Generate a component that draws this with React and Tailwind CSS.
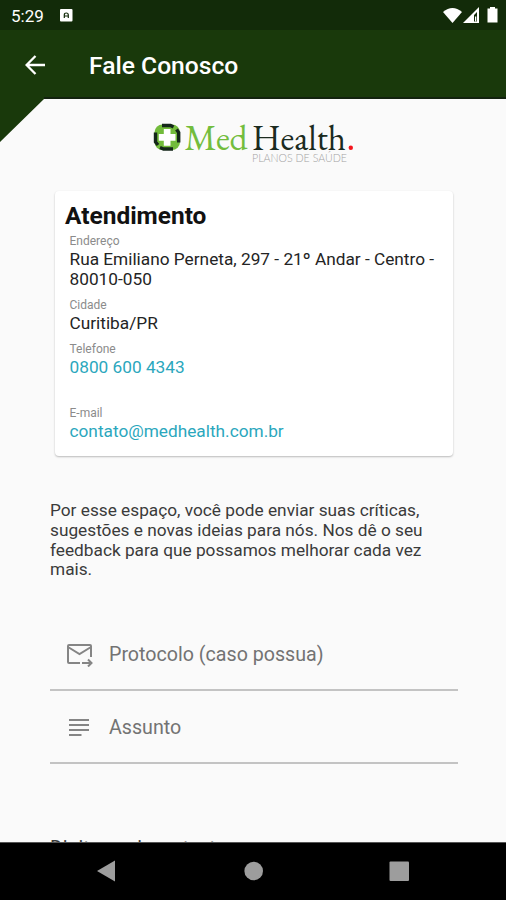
import React from "react";

// A single line of text that never wraps.
function T({ className = "", children }) {
  return <div className={"whitespace-nowrap " + className}>{children}</div>;
}

function Logo() {
  return (
    <svg className="block overflow-visible" width="210" height="52" viewBox="150 116 210 52">
      <rect x="154.500" y="124.500" width="25.500" height="25.500" rx="8" fill="#72bb3b" />
      <g fill="none" stroke="#14261a" strokeWidth="3.400">
        <path d="M162 125.500h8.500l3 1.500" />
        <path d="M176.500 129.500l2.200 3v10" />
        <path d="M173 149h-9.500l-3.500-1.500" />
        <path d="M158 145l-2.500-3v-9.500" />
      </g>
      <path d="M163.800 129h6.700v5h5v6.700h-5v5h-6.700v-5h-5V134h5z" fill="#fff" />
      <g fontFamily="'EB Garamond', Garamond, 'Liberation Serif', serif" fontSize="37">
        <text x="184.500" y="150" fill="#73bd3d" textLength="63" lengthAdjust="spacingAndGlyphs">Med</text>
        <text x="252" y="150" fill="#1b2b1f" textLength="94" lengthAdjust="spacingAndGlyphs">Health</text>
      </g>
      <circle cx="350.800" cy="147.800" r="2.200" fill="#f4151c" />
      <text x="252" y="161.500" fill="#a3a3a3" fontFamily="Lato, sans-serif" fontWeight="300" fontSize="12.500" textLength="95" lengthAdjust="spacingAndGlyphs">PLANOS DE SAÚDE</text>
    </svg>
  );
}

export default function App() {
  return (
    <div className="flex h-[900px] w-[506px] flex-col overflow-hidden bg-[#fafafa] font-['Roboto',sans-serif]">
      <div className="flex h-[30px] shrink-0 items-center bg-[#122b09] text-white">
        <T className="ml-[11px] mt-[2px] w-[49px] text-[17px] leading-5">5:29</T>
        <svg width="13" height="14" viewBox="0 0 13 14"><rect y="1" width="12.500" height="12.500" rx="1" fill="#fff" /><path d="M4.300 10V7q0-2 2-2t2 2v3M4.300 8h4" fill="none" stroke="#122b09" strokeWidth="1.200" /></svg>
        <svg className="ml-auto mr-[7px]" width="58" height="20" viewBox="441 5 58 20" fill="#fff">
          <path d="M443 12q9.500-8 19 0l-9.500 11z" />
          <path fillRule="evenodd" d="M463 23 479 7v16zM474 15v6.500h3V12z" />
          <path d="M475 16.500h1.300v5H475z" />
          <path d="M490 7h5v1.500h2.500v14h-10v-14h2.500z" />
        </svg>
      </div>
      <div className="flex h-[67px] shrink-0 items-center bg-[#19390b] text-white">
        <svg className="ml-[25px] mt-[2px]" width="21" height="20" viewBox="0 0 21 20" fill="none" stroke="#fff" strokeWidth="2.300"><path d="M20 10H2M10.500 1 1.600 10l8.900 9" /></svg>
        <T className="ml-[43px] mt-[4px] text-[24.650px] font-medium leading-8">Fale Conosco</T>
      </div>
      <div className="flex h-[745px] shrink-0 flex-col overflow-hidden">
        <div className="flex h-[94px] shrink-0">
          <svg className="block shrink-0" width="506" height="94" viewBox="0 97 506 94">
            <path d="M0 97h506v2H44L0 142z" fill="#19390b" />
            <path d="M44 98h462" stroke="#101b12" strokeWidth="1.500" />
          </svg>
          <div className="-ml-[356px] mt-[19px]"><Logo /></div>
        </div>
        <div className="ml-[55px] flex h-[265px] w-[398px] shrink-0 flex-col rounded-[4px] bg-white pl-[14.500px] text-[17.250px] leading-5 text-[#242424] shadow-[0_1px_2px_rgba(0,0,0,0.26)]">
          <T className="-ml-[4.500px] mt-[11px] text-[24.450px] font-bold leading-7 text-[#111]">Atendimento</T>
          <T className="mt-[4px] text-[12px] leading-[15px] text-[#8b8b8b]">Endereço</T>
          <T>Rua Emiliano Perneta, 297 - 21º Andar - Centro -</T>
          <T>80010-050</T>
          <T className="mt-[9px] text-[12px] leading-[15px] text-[#8b8b8b]">Cidade</T>
          <T>Curitiba/PR</T>
          <T className="mt-[9px] text-[12px] leading-[15px] text-[#8b8b8b]">Telefone</T>
          <T className="text-[#2ba7bd]">0800 600 4343</T>
          <T className="mt-[29px] text-[12px] leading-[15px] text-[#8b8b8b]">E-mail</T>
          <T className="text-[#2ba7bd]">contato@medhealth.com.br</T>
        </div>
        <div className="ml-[50px] mt-[45px] text-[17.250px] leading-[19.800px] text-[#3b3b3b]">
          <T>Por esse espaço, você pode enviar suas críticas,</T>
          <T>sugestões e novas ideias para nós. Nos dê o seu</T>
          <T>feedback para que possamos melhorar cada vez</T>
          <T>mais.</T>
        </div>
        <div className="ml-[50px] mt-[38px] flex h-[73px] w-[408px] shrink-0 items-center border-b-2 border-[#c3c3c3] text-[19.650px] text-[#737373]">
          <svg className="ml-[16px] mr-[16px] mt-[3px]" width="27" height="24" viewBox="66 643 27 24" fill="none" stroke="#858585" strokeWidth="2"><path d="M80 663H69q-1 0-1-1v-16q0-1 1-1h21q1 0 1 1v11M68 647l11.500 7 11.500-7M82 663h8M88 659.500l3.500 3.500-3.500 3.500" /></svg>
          <T className="mt-[3px]">Protocolo (caso possua)</T>
        </div>
        <div className="ml-[50px] flex h-[73px] w-[408px] shrink-0 items-center border-b-2 border-[#c3c3c3] text-[19.650px] text-[#737373]">
          <svg className="ml-[19px] mr-[20px] mt-[2px]" width="20" height="20" viewBox="0 0 20 20" stroke="#858585" strokeWidth="2"><path d="M0 2h20M0 7h20M0 12h20M0 17h12.500" /></svg>
          <T className="mt-[2px]">Assunto</T>
        </div>
        <T className="ml-[50px] mt-[73px] text-[19.500px] leading-6 text-[#3b3b3b]">Digite aqui seu texto</T>
      </div>
      <div className="flex h-[58px] shrink-0 items-center border-t border-[#555] bg-black">
        <svg width="506" height="57" viewBox="0 843 506 57" fill="#9d9d9d"><path d="M97 871 115 860.500v21z" /><circle cx="253.700" cy="871" r="9.300" /><rect x="389.500" y="861.500" width="19.500" height="19.500" rx="1" /></svg>
      </div>
    </div>
  );
}
